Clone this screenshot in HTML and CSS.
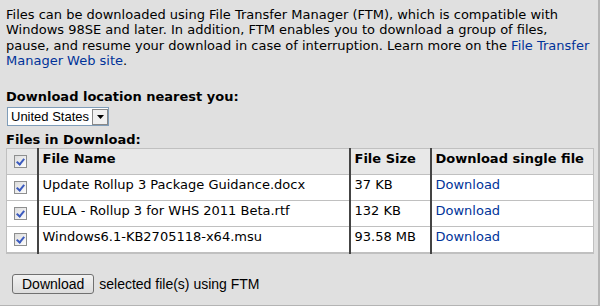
FILE: index.html
```html
<!DOCTYPE html>
<html lang="en">
<head>
  <meta charset="UTF-8" />
  <link rel="stylesheet" href="styles.css">
</head>
<body>
  <div class="panel">
    <p class="intro">
      Files can be downloaded using File Transfer Manager (FTM), which is compatible with<br>
      Windows 98SE and later. In addition, FTM enables you to download a group of files,<br>
      pause, and resume your download in case of interruption. Learn more on the <a href="#">File Transfer<br>
      Manager Web site</a>.
    </p>

    <div class="location">
      <label class="heading">Download location nearest you:</label>
      <div class="select">
        <span class="select-value">United States</span>
        <span class="select-arrow"><svg width="7" height="4" viewBox="0 0 7 4"><path d="M0 0h7L3.5 4z" fill="#000"/></svg></span>
      </div>
    </div>

    <div class="heading files-heading">Files in Download:</div>
    <table class="files">
      <colgroup>
        <col class="c-check">
        <col class="c-name">
        <col class="c-size">
        <col class="c-single">
      </colgroup>
      <tr class="head">
        <th class="check"><span class="box"></span></th>
        <th>File Name</th>
        <th>File Size</th>
        <th>Download single file</th>
      </tr>
      <tr>
        <td class="check"><span class="box"></span></td>
        <td>Update Rollup 3 Package Guidance.docx</td>
        <td>37 KB</td>
        <td><a href="#">Download</a></td>
      </tr>
      <tr>
        <td class="check"><span class="box"></span></td>
        <td>EULA - Rollup 3 for WHS 2011 Beta.rtf</td>
        <td>132 KB</td>
        <td><a href="#">Download</a></td>
      </tr>
      <tr>
        <td class="check"><span class="box"></span></td>
        <td>Windows6.1-KB2705118-x64.msu</td>
        <td>93.58 MB</td>
        <td><a href="#">Download</a></td>
      </tr>
    </table>

    <div class="actions">
      <button class="btn">Download</button>
      <span class="actions-text">selected file(s) using FTM</span>
    </div>
  </div>
</body>
</html>
```

FILE: styles.css
```css
html, body {
  margin: 0;
  padding: 0;
  background: #e0e0e0;
}

.panel {
  width: 600px;
  height: 306px;
  box-sizing: border-box;
  border-right: 2px solid #b4b4b4;
  border-bottom: 1px solid #b4b4b4;
  padding: 0 5px 0 6px;
  font-family: "DejaVu Sans", Verdana, sans-serif;
  font-size: 13px;
  color: #000;
}

a {
  color: #003399;
  text-decoration: none;
}

.intro {
  margin: 0;
  padding-top: 7px;
  line-height: 15.3px;
  white-space: nowrap;
}

.location {
  margin-top: 21px;
}

.heading {
  display: block;
  font-weight: bold;
  line-height: 16px;
}

.select {
  display: inline-flex;
  align-items: center;
  margin: 2px 0 0 1px;
  height: 19px;
  box-sizing: border-box;
  border: 1px solid #7f9db9;
  background: #fff;
  font-family: "Liberation Sans", Arial, sans-serif;
  font-size: 13px;
}

.select-value {
  padding: 0 3px 0 3px;
}

.select-arrow {
  width: 16px;
  height: 16px;
  margin-right: 0;
  box-sizing: border-box;
  border: 1px solid #888;
  background: #f0f0f0;
  display: flex;
  align-items: center;
  justify-content: center;
}

.files-heading {
  margin-top: 6px;
}

.files {
  width: 588px;
  table-layout: fixed;
  border-collapse: collapse;
  background: #fff;
  border: 1px solid #c0c0c0;
  border-bottom-width: 2px;
}

.c-check { width: 31px; }
.c-name { width: 312px; }
.c-size { width: 81px; }

.files th,
.files td {
  height: 26px;
  box-sizing: border-box;
  padding: 2px 4px 0;
  line-height: 15px;
  vertical-align: top;
  text-align: left;
  border-top: 1px solid #c0c0c0;
  border-left: 2px solid #444;
  white-space: nowrap;
  overflow: hidden;
}

.files th {
  background: #e8e8e8;
  font-weight: bold;
}

.files td.check,
.files th.check {
  border-left: 1px solid #c0c0c0;
  padding: 6px 0 0 7px;
}

.box {
  display: block;
  width: 11px;
  height: 11px;
  border: 1px solid #8e8f8f;
  background: linear-gradient(135deg, #dcdcdc, #fdfdfd);
  position: relative;
}

.box::after {
  content: "";
  position: absolute;
  left: 3px;
  top: 1px;
  width: 3px;
  height: 6px;
  border: solid #3c5bbf;
  border-width: 0 2px 2px 0;
  transform: rotate(40deg);
}

.actions {
  display: flex;
  align-items: center;
  gap: 5px;
  margin-top: 20px;
  padding-left: 6px;
  font-family: "Liberation Sans", Arial, sans-serif;
  font-size: 14px;
}

.btn {
  font-family: inherit;
  font-size: 14px;
  height: 20px;
  padding: 0 9px;
  border: 1px solid #707070;
  border-radius: 3px;
  background: linear-gradient(#f2f2f2, #dcdcdc);
  color: #000;
}
```
